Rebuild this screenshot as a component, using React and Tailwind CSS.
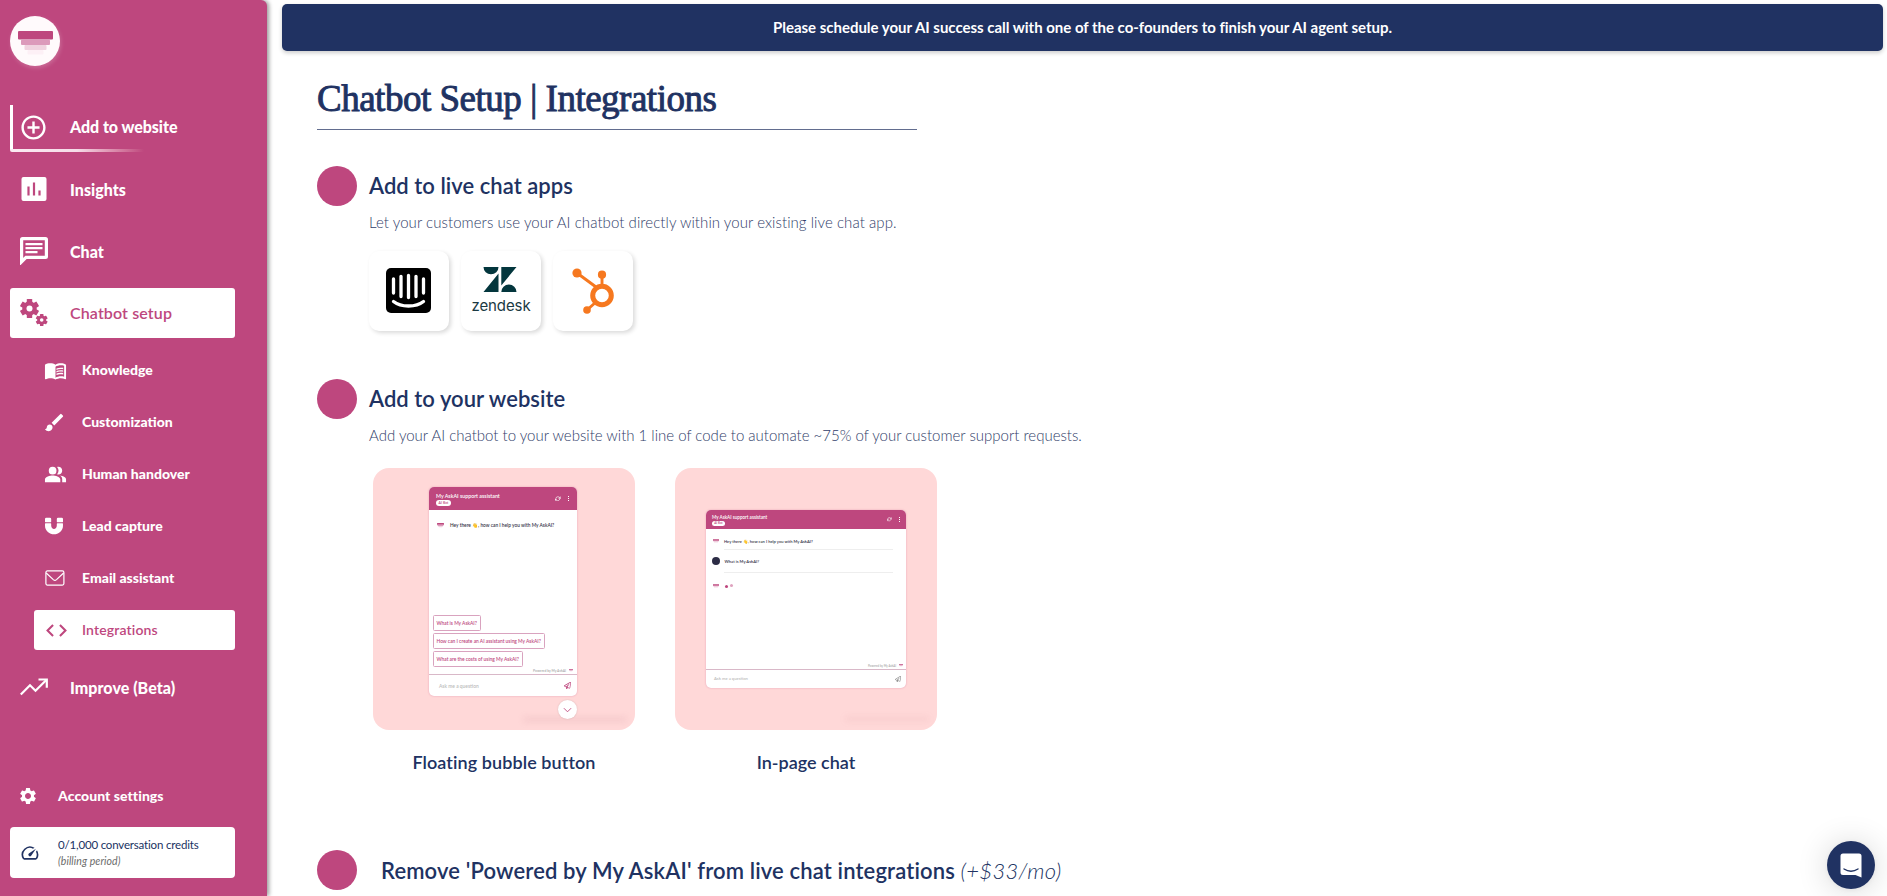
import {
  MdAddCircleOutline, MdMenuBook, MdBrush, MdPeopleAlt,
  MdCode, MdSettings, MdOutlineSpeed,
} from "react-icons/md";
import { FaMagnet, FaRegPaperPlane } from "react-icons/fa";
import { FiRefreshCw } from "react-icons/fi";

function Funnel({ className }) {
  return (
    <svg viewBox="0 0 35 24" className={className}>
      <rect x="0" y="0" width="35" height="8.500" rx="1" fill="#be477e" />
      <rect x="3" y="8.500" width="29" height="5.500" rx="1" fill="#dc9abb" />
      <rect x="6.500" y="14" width="22" height="5" rx="1" fill="#f0d3e0" />
      <rect x="9.500" y="19" width="16" height="4.500" rx="1" fill="#fdf0f6" />
    </svg>
  );
}

const TEETH = [0, 60, 120, 180, 240, 300];

function Gear({ cx, cy, outer, body, hole, tooth }) {
  return (
    <g>
      {TEETH.map((angle) => (
        <rect
          key={angle}
          x={cx - tooth / 2}
          y={cy - outer}
          width={tooth}
          height={outer - hole}
          rx="0.6"
          transform={`rotate(${angle} ${cx} ${cy})`}
        />
      ))}
      <circle cx={cx} cy={cy} r={body} />
      <circle cx={cx} cy={cy} r={hole} fill="#fff" />
    </g>
  );
}

function Gears() {
  return (
    <svg viewBox="0 0 28 28" className="w-[28px] h-[28px]" fill="currentColor">
      <Gear cx={9.5} cy={9.5} outer={9.5} body={7.2} hole={3} tooth={5.4} />
      <Gear cx={21.7} cy={21} outer={6} body={4.5} hole={1.8} tooth={3.5} />
    </svg>
  );
}

function ChartIcon() {
  return (
    <svg viewBox="0 0 26 24" className="w-[26px] h-[24px]">
      <rect x="0.500" width="25" height="24" rx="2" fill="#fff" />
      <path d="M7.500 9.500V18.500M13 5.500V18.500M18.500 13.500V18.500" stroke="#be477e" strokeWidth="2.200" />
    </svg>
  );
}

function ChatIcon() {
  return (
    <svg viewBox="0 0 28 28" className="w-[28px] h-[28px]" fill="none" stroke="#fff">
      <path d="M2.500 1.700H25.500Q26.400 1.700 26.400 2.600V19.500Q26.400 20.400 25.500 20.400H6L1.600 24.800V2.600Q1.600 1.700 2.500 1.700Z" strokeWidth="3.200" />
      <path d="M5.500 7.200H22.500M5.500 11.200H22.500M5.500 15.200H17.500" strokeWidth="2.300" />
    </svg>
  );
}

function TrendIcon() {
  return (
    <svg viewBox="0 0 28 18" className="w-[28px] h-[18px]" fill="none" stroke="#fff" strokeWidth="2.200">
      <path d="M0.800 16.500L10 7.200L15.500 12.700L26.300 2" />
      <path d="M18.500 1.500H26.800V9.800" />
    </svg>
  );
}

function Envelope() {
  return (
    <svg viewBox="0 0 20 16" className="w-[20px] h-[16px]" fill="none" stroke="currentColor" strokeWidth="1.200">
      <rect x="0.900" y="0.900" width="18" height="14.200" rx="1.500" />
      <path d="M1.200 3 L8.300 9.600 Q9.900 11 11.500 9.600 L18.600 3" />
    </svg>
  );
}

function NavItem({ icon, label }) {
  return (
    <div className="h-[50px] flex items-center pl-[10px] text-white">
      <span className="w-[28px] flex justify-center">{icon}</span>
      <span className="ml-[22px] pt-px text-[16px] font-black leading-5 tracking-[0.040px]">{label}</span>
    </div>
  );
}

function SubItem({ icon, label, active }) {
  return (
    <div className={active ? "h-10 mt-3 flex items-center ml-6 pl-[10px] rounded-[3px] bg-white text-[#be477e]" : "h-10 mt-3 flex items-center ml-6 pl-[10px] text-white"}>
      <span className="w-[22px] flex justify-center">{icon}</span>
      <span className={active ? "ml-4 pb-[2px] text-[14px] font-semibold tracking-[0.150px]" : "ml-4 pb-[2px] text-[14px] font-black"}>{label}</span>
    </div>
  );
}

function Sidebar() {
  return (
    <aside className="w-[267px] h-[896px] shrink-0 bg-[#be477e] rounded-tr-[6px] shadow-[2px_0_4px_rgba(0,0,0,0.4)] pl-[10px] pr-[32px] pt-4 flex flex-col">
      <div className="w-[50px] h-[50px] rounded-full bg-[#fffafc] shadow-[1px_2px_4px_rgba(255,255,255,0.2)] flex justify-center pt-[15px]">
        <Funnel className="w-[35px] h-[24px]" />
      </div>
      <div className="mt-[39px] h-[47px] flex flex-col">
        <div className="h-[44px] border-l-[3px] border-white flex items-center pl-[7px] text-white">
          <span className="w-[28px] flex justify-center"><MdAddCircleOutline className="w-[29px] h-[29px] shrink-0 mr-[2px]" /></span>
          <span className="ml-[22px] text-[16px] font-black leading-5 tracking-[-0.050px]">Add to website</span>
        </div>
        <div className="h-[3px] w-[134px] rounded-bl-[2px] bg-gradient-to-r from-[#fbeaf2] via-[#f5dce8] to-[#be477e]" />
      </div>
      <div className="mt-3 flex flex-col">
        <NavItem icon={<ChartIcon />} label="Insights" />
        <div className="h-3" />
        <NavItem icon={<ChatIcon />} label="Chat" />
      </div>
      <div className="mt-3 h-[50px] shrink-0 rounded-[3px] bg-white text-[#be477e] flex items-center pl-[10px]">
        <Gears />
        <span className="ml-[22px] text-[16px] font-semibold tracking-[0.120px]">Chatbot setup</span>
      </div>
      <SubItem icon={<MdMenuBook className="w-[23px] h-[23px] shrink-0" />} label="Knowledge" />
      <SubItem icon={<MdBrush className="w-[23px] h-[23px] shrink-0 mr-px" />} label="Customization" />
      <SubItem icon={<MdPeopleAlt className="w-[23px] h-[23px] shrink-0" />} label="Human handover" />
      <SubItem icon={<FaMagnet className="w-[18px] h-[18px] mr-[3px]" />} label="Lead capture" />
      <SubItem icon={<Envelope />} label="Email assistant" />
      <SubItem icon={<MdCode className="w-[25px] h-[25px] shrink-0 ml-[3px]" />} label="Integrations" active />
      <div className="mt-3"><NavItem icon={<TrendIcon />} label="Improve (Beta)" /></div>
      <div className="mt-auto flex items-center h-[30px] text-white pl-[8px]">
        <MdSettings className="w-[20px] h-[20px]" />
        <span className="ml-5 pb-[2px] text-[14px] font-black tracking-[0.050px]">Account settings</span>
      </div>
      <div className="mt-4 mb-[18px] h-[51px] rounded-[4px] bg-white flex items-center pl-[10px]">
        <MdOutlineSpeed className="w-5 h-5 text-[#203262]" />
        <div className="ml-[18px] flex flex-col">
          <span className="text-[11.500px] leading-[17px] tracking-[-0.180px] text-[#203262]">0/1,000 conversation credits</span>
          <span className="text-[10.500px] leading-4 italic tracking-[0.080px] text-[#6b6b6b]">(billing period)</span>
        </div>
      </div>
    </aside>
  );
}

function Section({ title, children }) {
  return (
    <section>
      <div className="flex items-center h-10">
        <span className="w-10 h-10 rounded-full bg-[#be477e]" />
        <h2 className="ml-3 pb-[2px] text-[22px] font-semibold tracking-[0.040px] text-[#203262]">{title}</h2>
      </div>
      <div className="pl-[52px]">{children}</div>
    </section>
  );
}

function AppTile({ children }) {
  return <div className="w-20 h-20 rounded-[10px] bg-white shadow-[2px_2px_4px_rgba(0,0,0,0.15)] flex items-center justify-center">{children}</div>;
}

function IntercomLogo() {
  return (
    <svg viewBox="0 0 45 45" className="w-[45px] h-[45px] mr-px mb-px">
      <rect width="45" height="45" rx="5" fill="#000" />
      <g stroke="#fff" strokeWidth="3.300" strokeLinecap="round" fill="none">
        <path d="M7.500 11V25M15 8.300V28.500M22.500 7.500V29.500M30 8.300V28.500M37.500 11V25M7.500 33.500C15 39.500 30 39.500 37.500 33.500" />
      </g>
    </svg>
  );
}

function ZendeskLogo() {
  return (
    <div className="flex flex-col items-center">
      <svg viewBox="0 0 34 25" className="w-[34px] h-[25px] ml-[-2px]" fill="#03363d">
        <path d="M0.500 0H15.500A7.500 7.300 0 0 1 0.500 0ZM15.500 6.500V25H0.500ZM18.300 0H33.500L18.300 18.500ZM18.300 25A7.600 7.400 0 0 1 33.500 25Z" />
      </svg>
      <span className="mt-[5px] text-[15px] leading-[18px] font-['Inter',sans-serif] text-[#1b3a43] tracking-[-0.100px]">zendesk</span>
    </div>
  );
}

function HubspotLogo() {
  return (
    <svg viewBox="0 0 42 46" className="w-[42px] h-[46px]" fill="#f6781f" stroke="#f6781f">
      <circle cx="5" cy="5" r="4.600" stroke="none" />
      <circle cx="30" cy="6.700" r="4.100" stroke="none" />
      <circle cx="15" cy="42" r="3.800" stroke="none" />
      <path d="M5 5L24 19M30 7V18M15 42L24 34" strokeWidth="2.900" fill="none" />
      <circle cx="30" cy="27.500" r="9.300" strokeWidth="5" fill="none" />
    </svg>
  );
}

function ChatHeader({ small }) {
  return (
    <div className={small ? "h-[19px] bg-[#be477e] text-white flex justify-between items-center pl-[6px] pr-[6px]" : "h-[23px] bg-[#be477e] text-white flex justify-between items-center pl-[7px] pr-[8px]"}>
      <div className="flex flex-col items-start">
        <span className={small ? "text-[4.600px] leading-[7px] font-semibold" : "text-[5.300px] leading-[8px] font-semibold"}>My AskAI support assistant</span>
        <span className={small ? "w-[13px] h-[5px] rounded-full bg-white text-[#be477e] text-[3px] leading-[5px] text-center" : "w-[15px] h-[6px] rounded-full bg-white text-[#be477e] text-[3.500px] leading-[6px] text-center"}>AI Bot</span>
      </div>
      <div className="flex items-center gap-[7px]">
        <FiRefreshCw className={small ? "w-[4.500px] h-[4.500px]" : "w-[5.500px] h-[5.500px]"} strokeWidth="3" />
        <span className="flex flex-col gap-[0.700px]">
          <i className="block w-[1.500px] h-[1.500px] bg-white" />
          <i className="block w-[1.500px] h-[1.500px] bg-white" />
          <i className="block w-[1.500px] h-[1.500px] bg-white" />
        </span>
      </div>
    </div>
  );
}

function Question({ children }) {
  return <div className="h-[16px] px-[3px] border border-[#d9a3bf] rounded-[1.500px] text-[4.850px] leading-[15px] text-[#be477e] whitespace-nowrap">{children}</div>;
}

function FloatingPreview() {
  return (
    <div className="relative w-[262px] h-[262px] rounded-2xl bg-[#ffd8d8] overflow-hidden pt-[19px] pl-[56px]">
      <div className="w-[148px] h-[209px] rounded-[5px] bg-white overflow-hidden flex flex-col shadow-[0_0_2px_rgba(190,71,126,0.4)]">
        <ChatHeader />
        <div className="mt-[11px] pl-[8px] flex items-center gap-[6px] h-[8px]">
          <Funnel className="w-[7px] h-[5px]" />
          <span className="text-[4.800px] leading-[8px] text-[#333347] whitespace-nowrap">Hey there 👋, how can I help you with My AskAI?</span>
        </div>
        <div className="mt-auto pl-[3.500px] flex flex-col items-start gap-[2px]">
          <Question>What is My AskAI?</Question>
          <Question>How can I create an AI assistant using My AskAI?</Question>
          <Question>What are the costs of using My AskAI?</Question>
        </div>
        <div className="h-[7px] flex items-center justify-end gap-[3px] pr-1 text-[3.400px] text-[#aaa]">Powered by My AskAI<Funnel className="w-1 h-[3px]" /></div>
        <div className="h-[22px] shrink-0 border-t border-[#d9b8c8] flex items-center justify-between pl-[10px] pr-[6px] text-[4.900px] text-[#bbb]">
          <span>Ask me a question</span>
          <FaRegPaperPlane className="w-[7px] h-[7px] text-[#be477e]" />
        </div>
      </div>
      <span className="absolute left-[150px] top-[249px] w-[104px] h-[5px] rounded-full bg-[#b06070]/12 blur-[3px]" />
      <span className="absolute left-[185px] top-[232px] w-[19px] h-[19px] rounded-full bg-white shadow-[0_0_2px_rgba(0,0,0,0.15)] flex items-center justify-center">
        <svg viewBox="0 0 10 6" className="w-[9px] h-[6px] mt-px" fill="none" stroke="#be477e"><path d="M1 1l4 4 4-4" /></svg>
      </span>
    </div>
  );
}

function InPagePreview() {
  return (
    <div className="relative w-[262px] h-[262px] rounded-2xl bg-[#ffd8d8] overflow-hidden pt-[42px] pl-[31px]">
      <div className="w-[200px] h-[178px] rounded-[5px] bg-white overflow-hidden flex flex-col shadow-[0_0_2px_rgba(190,71,126,0.4)]">
        <ChatHeader small />
        <div className="h-[20px] ml-[7px] flex items-center gap-[5px] pt-[4px]">
          <Funnel className="w-[6px] h-[4.500px]" />
          <span className="text-[4.100px] leading-[7px] text-[#333347]">Hey there 👋, how can I help you with My AskAI?</span>
        </div>
        <div className="ml-[18px] mr-[13px] h-px bg-[#eeeeee]" />
        <div className="h-[22px] ml-[6px] flex items-center gap-[4.500px]">
          <span className="w-[8px] h-[8px] rounded-full bg-[#2c2c45]" />
          <span className="text-[4.150px] leading-[7px] text-[#333347]">What is My AskAI?</span>
        </div>
        <div className="ml-[18px] mr-[13px] h-px bg-[#eeeeee]" />
        <div className="h-[26px] ml-[7px] flex items-center">
          <Funnel className="w-[6px] h-[4.500px]" />
          <span className="ml-[6px] mt-px w-[3px] h-[3px] rounded-full bg-[#be477e]" />
          <span className="ml-[2px] mb-px w-[2.500px] h-[2.500px] rounded-full bg-[#dfa3bf]" />
        </div>
        <div className="mt-auto h-[7px] flex items-center justify-end gap-[3px] pr-[3px] text-[2.900px] text-[#aaa]">Powered by My AskAI<Funnel className="w-1 h-[3px]" /></div>
        <div className="h-[19px] shrink-0 border-t border-[#d9b8c8] flex items-center justify-between pl-[8px] pr-[5px] text-[4.200px] text-[#bbb]">
          <span>Ask me a question</span>
          <FaRegPaperPlane className="w-[6px] h-[6px] text-[#888]" />
        </div>
      </div>
      <span className="absolute left-[170px] top-[249px] w-[84px] h-[4px] rounded-full bg-[#b06070]/10 blur-[3px]" />
    </div>
  );
}

export default function App() {
  return (
    <div className="w-[1887px] h-[896px] overflow-hidden flex bg-white font-['Lato',sans-serif]">
      <Sidebar />
      <main className="flex-1 min-w-0 pt-1 pl-[15px] pr-1">
        <div className="h-[47px] rounded-[5px] bg-[#203262] shadow-[0_2px_4px_rgba(0,0,0,0.2)] flex items-center justify-center text-white text-[15px] font-bold tracking-[-0.020px]">
          Please schedule your AI success call with one of the co-founders to finish your AI agent setup.
        </div>
        <div className="pl-[35px]">
          <div className="w-[600px] h-[79px] border-b border-[#626d8f] pt-[25px]">
            <h1 className="font-['Liberation_Serif',serif] text-[37px] leading-[45px] tracking-[-0.500px] text-[#203262] whitespace-nowrap [-webkit-text-stroke:0.9px_#203262]">Chatbot Setup | Integrations</h1>
          </div>
          <div className="mt-9">
            <Section title="Add to live chat apps">
              <p className="mt-[6px] text-[15px] leading-5 font-light tracking-[0.065px] text-[#303d69]">Let your customers use your AI chatbot directly within your existing live chat app.</p>
              <div className="mt-[19px] flex gap-3">
                <AppTile><IntercomLogo /></AppTile>
                <AppTile><ZendeskLogo /></AppTile>
                <AppTile><HubspotLogo /></AppTile>
              </div>
            </Section>
          </div>
          <div className="mt-12">
            <Section title="Add to your website">
              <p className="mt-[6px] text-[15px] leading-5 font-light text-[#303d69]">Add your AI chatbot to your website with 1 line of code to automate ~75% of your customer support requests.</p>
              <div className="mt-[23px] ml-1 flex gap-10 text-center text-[18px] leading-6 font-semibold text-[#203262]">
                <div><FloatingPreview /><p className="mt-5 tracking-[0.080px]">Floating bubble button</p></div>
                <div><InPagePreview /><p className="mt-5">In-page chat</p></div>
              </div>
            </Section>
          </div>
          <div className="mt-[76px] flex items-center h-10">
            <span className="w-10 h-10 rounded-full bg-[#be477e]" />
            <h2 className="ml-6 text-[22px] font-semibold tracking-[0.140px] text-[#203262]">Remove 'Powered by My AskAI' from live chat integrations <span className="font-light italic tracking-[0.300px]">(+$33/mo)</span></h2>
          </div>
        </div>
      </main>
      <button className="fixed right-3 bottom-[7px] w-12 h-12 rounded-full bg-[#203262] shadow-[0_1px_6px_rgba(0,0,0,0.06),0_2px_32px_rgba(0,0,0,0.16)] flex items-center justify-center">
        <svg viewBox="0 0 22 25" className="w-[22px] h-[25px]">
          <path d="M3 0.500H19Q21.500 0.500 21.500 3V24.500L15.500 22H3Q0.500 22 0.500 19.500V3Q0.500 0.500 3 0.500Z" fill="#fff" />
          <path d="M4 16Q11 20.500 18 16" fill="none" stroke="#203262" strokeWidth="1.400" strokeLinecap="round" />
        </svg>
      </button>
    </div>
  );
}
